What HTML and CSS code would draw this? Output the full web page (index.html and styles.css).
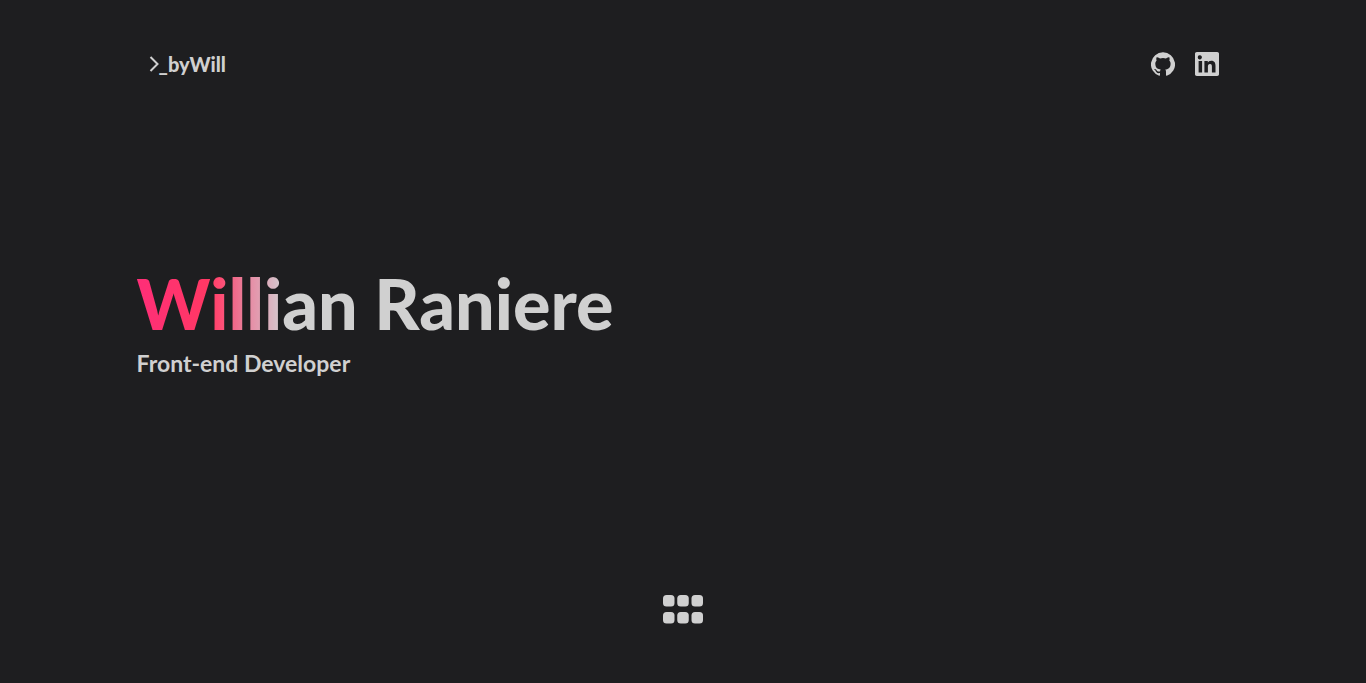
FILE: index.html
```html
<!DOCTYPE html>
<html lang="en">
<head>
<meta charset="utf-8">
<meta name="viewport" content="width=device-width, initial-scale=1">
<title>Willian Raniere</title>
<link rel="stylesheet" href="styles.css">
</head>
<body>
<div class="page">
  <header class="header">
    <a class="logo" href="#home"><svg class="prompt" viewBox="0 0 10 16" aria-hidden="true"><path d="M1.5 1l7 7-7 7"/></svg><span>_byWill</span></a>
    <nav class="social" aria-label="Social links">
      <a href="#github" aria-label="GitHub"><svg viewBox="0 0 24 24"><path d="M12 .3a12 12 0 0 0-3.8 23.4c.6.1.8-.3.8-.6v-2c-3.3.7-4-1.6-4-1.6-.6-1.4-1.4-1.8-1.4-1.8-1-.7.1-.7.1-.7 1.2 0 1.9 1.2 1.9 1.2 1 1.8 2.8 1.3 3.5 1 0-.8.4-1.3.7-1.6-2.7-.3-5.5-1.3-5.5-6 0-1.2.5-2.3 1.3-3.1-.2-.4-.6-1.6 0-3.2 0 0 1-.3 3.4 1.2a11.5 11.5 0 0 1 6 0c2.3-1.5 3.3-1.2 3.3-1.2.6 1.6.2 2.8 0 3.2.9.8 1.3 1.9 1.3 3.2 0 4.6-2.8 5.6-5.5 5.9.5.4.9 1 .9 2.2v3.3c0 .3.1.7.8.6A12 12 0 0 0 12 .3"/></svg></a>
      <a href="#linkedin" aria-label="LinkedIn"><svg viewBox="0 0 24 24"><path d="M20.4 20.5h-3.5v-5.6c0-1.3 0-3-1.9-3s-2.1 1.4-2.1 2.9v5.7H9.4V9h3.4v1.6c.5-.9 1.6-1.9 3.4-1.9 3.6 0 4.3 2.4 4.3 5.5v6.3zM5.3 7.4a2.1 2.1 0 1 1 0-4.1 2.1 2.1 0 0 1 0 4.1zm1.8 13.1H3.6V9h3.5v11.5zM22.2 0H1.8C.8 0 0 .8 0 1.7v20.6c0 .9.8 1.7 1.8 1.7h20.4c1 0 1.8-.8 1.8-1.7V1.7C24 .8 23.2 0 22.2 0z"/></svg></a>
    </nav>
  </header>
  <main class="hero">
    <h1 class="name">Willian Raniere</h1>
    <p class="role">Front-end Developer</p>
  </main>
  <footer class="footer">
    <button class="menu" type="button" aria-label="Open menu"><svg viewBox="0 0 40 29"><rect width="11.5" height="11.5" rx="3.5"/><rect x="14.25" width="11.5" height="11.5" rx="3.5"/><rect x="28.5" width="11.5" height="11.5" rx="3.5"/><rect y="17" width="11.5" height="11.5" rx="3.5"/><rect x="14.25" y="17" width="11.5" height="11.5" rx="3.5"/><rect x="28.5" y="17" width="11.5" height="11.5" rx="3.5"/></svg></button>
  </footer>
</div>
</body>
</html>
```
FILE: styles.css
```css
* { box-sizing: border-box; }
body {
  margin: 0;
  background: #1e1e20;
  color: #d0d0d0;
  font-family: Lato, "Open Sans", sans-serif;
}
.page {
  display: flex;
  flex-direction: column;
  min-height: 100vh;
  padding: 0 10%;
}
.header {
  display: flex;
  align-items: center;
  justify-content: space-between;
  height: 127px;
  padding: 0 10px 0 12px;
}
.logo {
  display: flex;
  align-items: center;
  color: inherit;
  font-size: 20px;
  font-weight: 900;
  line-height: 28px;
  text-decoration: none;
}
.prompt {
  width: 10px;
  height: 16px;
  fill: none;
  stroke: currentColor;
  stroke-width: 2;
}
.social {
  display: flex;
  gap: 20px;
}
.social a { color: inherit; }
.social svg {
  display: block;
  width: 24px;
  height: 24px;
  fill: currentColor;
}
.hero {
  display: flex;
  flex: 1;
  flex-direction: column;
  align-items: flex-start;
  justify-content: center;
  gap: 2px;
  padding-bottom: 86px;
}
.name {
  margin: 0;
  background: linear-gradient(90deg, #ff2e78 0, #ff3864 70px, #ff4c74 84px, #f06a8a 98px, #e592a9 116px, #d8bcc6 138px, #d0d0d0 146px);
  background-clip: text;
  -webkit-background-clip: text;
  color: transparent;
  font-size: 70px;
  font-weight: 900;
  line-height: 88px;
}
.role {
  margin: 0;
  font-size: 23px;
  font-weight: 700;
  line-height: 28px;
}
.footer {
  display: flex;
  justify-content: center;
  padding-bottom: 59px;
}
.menu {
  padding: 0;
  border: 0;
  background: none;
  color: inherit;
  cursor: pointer;
}
.menu svg {
  display: block;
  width: 40px;
  height: 29px;
  fill: currentColor;
}
```
